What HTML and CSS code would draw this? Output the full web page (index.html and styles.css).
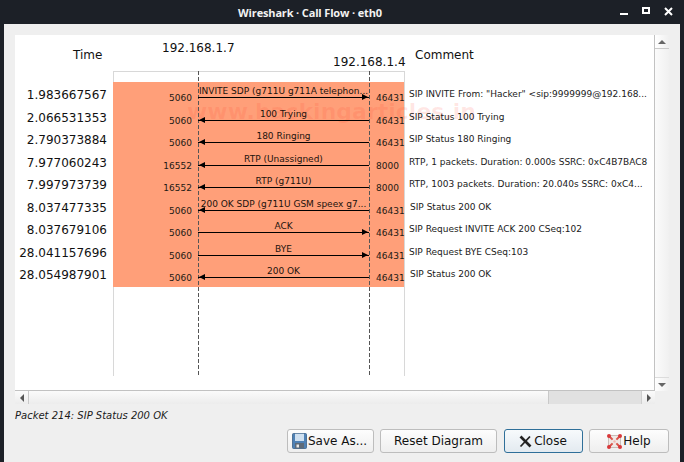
FILE: index.html
```html
<!DOCTYPE html>
<html lang="en">
<head>
<meta charset="utf-8">
<title>Wireshark · Call Flow · eth0</title>
<link rel="stylesheet" href="styles.css">
</head>
<body>
<div class="window">
  <header class="titlebar">
    <div class="title">Wireshark · Call Flow · eth0</div>
    <div class="winbtns">
      <span class="wb-min"></span>
      <span class="wb-max"></span>
      <svg class="wb-close" width="9" height="9" viewBox="0 0 9 9"><path d="M1 1l7 7M8 1l-7 7" stroke="#fff" stroke-width="2" fill="none"/></svg>
    </div>
  </header>
  <main class="content">
    <section class="scrollarea">
      <div class="viewrow">
        <div class="plot">
          <div class="hdr hdr-time">Time</div>
          <div class="hdr hdr-ip1">192.168.1.7</div>
          <div class="hdr hdr-ip2">192.168.1.4</div>
          <div class="hdr hdr-comment">Comment</div>
          <div class="axis"></div>
          <div class="band"></div>
          <div class="watermark">www.hackingarticles.in</div>
          <div class="node node-a"></div>
          <div class="node node-b"></div>
          <div class="rows">
            <div class="row"><div class="time">1.983667567</div><div class="port-l">5060</div><div class="flow right"><div class="label">INVITE SDP (g711U g711A telephon...</div><div class="line"></div></div><div class="port-r">46431</div><div class="comment">SIP INVITE From: "Hacker" &lt;sip:9999999@192.168...</div></div>
            <div class="row"><div class="time">2.066531353</div><div class="port-l">5060</div><div class="flow left"><div class="label">100 Trying</div><div class="line"></div></div><div class="port-r">46431</div><div class="comment">SIP Status 100 Trying</div></div>
            <div class="row"><div class="time">2.790373884</div><div class="port-l">5060</div><div class="flow left"><div class="label">180 Ringing</div><div class="line"></div></div><div class="port-r">46431</div><div class="comment">SIP Status 180 Ringing</div></div>
            <div class="row"><div class="time">7.977060243</div><div class="port-l">16552</div><div class="flow left"><div class="label">RTP (Unassigned)</div><div class="line"></div></div><div class="port-r">8000</div><div class="comment">RTP, 1 packets. Duration: 0.000s SSRC: 0xC4B7BAC8</div></div>
            <div class="row"><div class="time">7.997973739</div><div class="port-l">16552</div><div class="flow left"><div class="label">RTP (g711U)</div><div class="line"></div></div><div class="port-r">8000</div><div class="comment">RTP, 1003 packets. Duration: 20.040s SSRC: 0xC4...</div></div>
            <div class="row"><div class="time">8.037477335</div><div class="port-l">5060</div><div class="flow left"><div class="label">200 OK SDP (g711U GSM speex g7...</div><div class="line"></div></div><div class="port-r">46431</div><div class="comment comment-in">SIP Status 200 OK</div></div>
            <div class="row"><div class="time">8.037679106</div><div class="port-l">5060</div><div class="flow right"><div class="label">ACK</div><div class="line"></div></div><div class="port-r">46431</div><div class="comment">SIP Request INVITE ACK 200 CSeq:102</div></div>
            <div class="row"><div class="time">28.041157696</div><div class="port-l">5060</div><div class="flow right"><div class="label">BYE</div><div class="line"></div></div><div class="port-r">46431</div><div class="comment">SIP Request BYE CSeq:103</div></div>
            <div class="row"><div class="time">28.054987901</div><div class="port-l">5060</div><div class="flow left"><div class="label">200 OK</div><div class="line"></div></div><div class="port-r">46431</div><div class="comment comment-in">SIP Status 200 OK</div></div>
          </div>
        </div>
        <div class="vscroll">
          <div class="sb-btn sb-up"><span class="tri tri-up"></span></div>
          <div class="vthumb"></div>
          <div class="sb-btn sb-down"><span class="tri tri-down"></span></div>
        </div>
      </div>
      <div class="hscroll">
        <div class="hs-btn hs-left"><span class="tri tri-left"></span></div>
        <div class="hthumb"></div>
        <div class="htrough"></div>
        <div class="hs-btn hs-right"><span class="tri tri-right"></span></div>
      </div>
    </section>
    <p class="status">Packet 214: SIP Status 200 OK</p>
    <footer class="buttons">
      <button class="btn btn-save" type="button">
        <svg class="ico" width="15" height="16" viewBox="0 0 15 16"><rect x=".5" y=".5" width="14" height="15" rx="1" fill="#4f81b5" stroke="#3a5f88" stroke-width=".8"/><rect x="3" y=".8" width="9" height="7.2" fill="#cfe0f0"/><rect x="3" y="10" width="9" height="5.4" fill="#5d6a78"/><rect x="4.5" y="11.5" width="2.5" height="3" fill="#e8e8e8"/></svg>
        <span>Save As...</span>
      </button>
      <button class="btn btn-reset" type="button"><span>Reset Diagram</span></button>
      <button class="btn btn-close" type="button">
        <svg class="ico" width="13" height="13" viewBox="0 0 13 13"><path d="M1.5 1.5L11.5 11.5" stroke="#222" stroke-width="2.6" fill="none"/><path d="M11 1.5L1.5 11.5" stroke="#222" stroke-width="1.8" fill="none"/></svg>
        <span>Close</span>
      </button>
      <button class="btn btn-help" type="button">
        <svg class="ico" width="17" height="17" viewBox="0 0 17 17"><rect x="2.5" y="2.5" width="12" height="12" fill="#efe9e6" stroke="#c9bdb8"/><path d="M3.2 3.2L6.6 6.6M13.8 3.2L10.4 6.6M3.2 13.8L6.6 10.4M13.8 13.8L10.4 10.4" stroke="#d9534a" stroke-width="2"/><circle cx="3" cy="3" r="2" fill="#d9383a"/><circle cx="14" cy="3" r="2" fill="#d9383a"/><circle cx="3" cy="14" r="2" fill="#d9383a"/><circle cx="14" cy="14" r="2" fill="#d9383a"/><circle cx="8.5" cy="8.5" r="1.2" fill="#f4b8b0"/></svg>
        <span>Help</span>
      </button>
    </footer>
  </main>
</div>
</body>
</html>
```
FILE: styles.css
```css
* { box-sizing: border-box; }
html, body { margin: 0; padding: 0; }
body {
  width: 684px;
  height: 462px;
  overflow: hidden;
  background: #1c2027;
  font-family: "DejaVu Sans", sans-serif;
  color: #111;
}
.window { display: flex; flex-direction: column; height: 462px; }

.titlebar {
  position: relative;
  height: 24px;
  flex: none;
  background: #1c2027;
  display: flex;
  align-items: center;
  justify-content: center;
  padding-right: 64px;
}
.title {
  font-family: "Open Sans", sans-serif;
  font-weight: 700;
  font-size: 11px;
  color: #f2f2f2;
  letter-spacing: -0.15px;
}
.winbtns {
  position: absolute;
  right: 11px;
  top: 7px;
  display: flex;
  align-items: flex-start;
  gap: 14px;
}
.wb-min { width: 8px; height: 2px; margin-top: 6px; background: #fff; }
.wb-max { width: 8px; height: 7px; border: 2px solid #fff; }
.wb-close { display: block; }

.content {
  flex: 1;
  margin: 0 4px;
  background: #efefef;
  padding: 11px 11px 0;
  display: flex;
  flex-direction: column;
}

.scrollarea { width: 654px; flex: none; }
.viewrow { display: flex; height: 356px; }
.plot {
  position: relative;
  width: 640px;
  height: 356px;
  background: #fff;
  border-right: 1px solid #c2c2c2;
  border-bottom: 1px solid #c2c2c2;
  overflow: hidden;
}
.hdr { position: absolute; font-size: 12px; line-height: 14px; white-space: nowrap; }
.hdr-time { left: 58px; top: 13px; }
.hdr-ip1 { left: 147px; top: 6px; }
.hdr-ip2 { left: 318px; top: 20px; }
.hdr-comment { left: 400px; top: 13px; }

.axis {
  position: absolute;
  left: 98px;
  top: 36px;
  width: 292px;
  height: 305px;
  border: 1px solid #d8d8d8;
  border-bottom: 0;
}
.band {
  position: absolute;
  left: 98px;
  top: 47px;
  width: 291px;
  height: 205px;
  background: #ff9f79;
}
.watermark {
  position: absolute;
  left: 172px;
  top: 62px;
  font-weight: 700;
  font-size: 22px;
  line-height: 30px;
  color: rgba(255, 60, 40, 0.12);
  white-space: nowrap;
}
.node {
  position: absolute;
  top: 36px;
  height: 305px;
  width: 1px;
  background: repeating-linear-gradient(to bottom, #555 0 4px, transparent 4px 6px);
}
.node-a { left: 183px; }
.node-b { left: 354px; }

.rows {
  position: absolute;
  left: 0;
  top: 51px;
  width: 640px;
}
.row {
  display: grid;
  grid-template-columns: 92px 91px 171px 35px 1fr;
  height: 22.5px;
}
.time {
  font-size: 12px;
  line-height: 14px;
  padding-top: 2px;
  text-align: right;
  white-space: nowrap;
}
.port-l, .port-r {
  font-size: 9px;
  line-height: 12px;
  padding-top: 6px;
  color: #221a14;
  white-space: nowrap;
}
.port-l { text-align: right; padding-right: 6px; }
.port-r { padding-left: 7px; }
.flow { position: relative; }
.label {
  height: 11px;
  font-size: 9px;
  line-height: 11px;
  text-align: center;
  white-space: nowrap;
  color: #1c130d;
}
.line { height: 1px; background: #000; }
.flow.left .line::before,
.flow.right .line::after {
  content: "";
  position: absolute;
  top: 8px;
  border-top: 3px solid transparent;
  border-bottom: 3px solid transparent;
}
.flow.left .line::before { left: 1px; border-right: 6px solid #000; }
.flow.right .line::after { right: 1px; border-left: 6px solid #000; }
.comment {
  font-size: 9px;
  line-height: 12px;
  padding-top: 2px;
  padding-left: 5px;
  color: #1a1a1a;
  white-space: nowrap;
}
.comment-in { padding-left: 6px; }

.vscroll {
  width: 14px;
  display: flex;
  flex-direction: column;
  background: linear-gradient(to right, #f4f4f4, #e9e9e9);
}
.sb-btn {
  height: 14px;
  display: flex;
  align-items: center;
  justify-content: center;
  background: linear-gradient(to right, #fff, #efefef);
}
.sb-up { border-bottom: 1px solid #c9c9c9; }
.sb-down { border-top: 1px solid #dcdcdc; }
.vthumb { flex: 1; background: linear-gradient(to right, #fbfbfb, #f0f0f0); }
.tri { display: block; width: 0; height: 0; }
.tri-up { border: 4px solid transparent; border-top: 0; border-bottom: 4px solid #666; }
.tri-down { border: 4px solid transparent; border-bottom: 0; border-top: 4px solid #666; }
.tri-left { border: 4px solid transparent; border-left: 0; border-right: 4px solid #555; }
.tri-right { border: 4px solid transparent; border-right: 0; border-left: 4px solid #555; }

.hscroll { display: flex; width: 640px; height: 13px; }
.hs-btn {
  width: 14px;
  display: flex;
  align-items: center;
  justify-content: center;
  background: linear-gradient(to bottom, #fbfbfb, #ececec);
}
.hs-left { border-right: 1px solid #c9c9c9; }
.hs-right { border-left: 1px solid #cfcfcf; }
.hthumb { flex: 1; background: linear-gradient(to bottom, #fbfbfb, #ececec); border-right: 1px solid #c9c9c9; }
.htrough { width: 92px; background: #e1e1e1; }

.status {
  margin: 0;
  height: 25px;
  padding-top: 5px;
  font-size: 10px;
  line-height: 13px;
  font-style: italic;
  color: #1a1a1a;
}
.buttons {
  display: flex;
  justify-content: flex-end;
  gap: 6.5px;
}
.btn {
  height: 24px;
  padding: 0;
  border: 1px solid #bdbdbd;
  border-radius: 3px;
  background: linear-gradient(to bottom, #fdfdfd, #eeeeee);
  font-family: "DejaVu Sans", sans-serif;
  font-size: 12px;
  color: #111;
  display: flex;
  align-items: center;
  justify-content: center;
  gap: 1px;
}
.ico { display: block; flex: none; }
.btn-save { width: 87px; padding-right: 1px; }
.btn-reset { width: 117px; }
.btn-close { width: 79px; gap: 2px; border-color: #2f6f99; background: linear-gradient(to bottom, #f7fafc, #e3eaf0); }
.btn-help { width: 80px; gap: 0; padding-right: 1px; }
```
